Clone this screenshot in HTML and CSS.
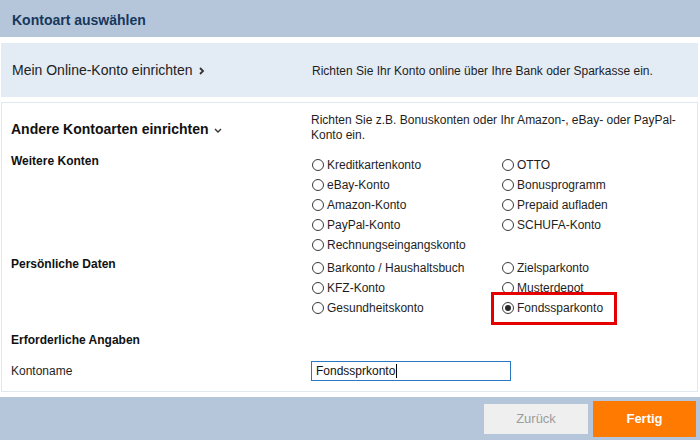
FILE: index.html
```html
<!DOCTYPE html>
<html lang="de">
<head>
<meta charset="utf-8">
<title>Kontoart auswählen</title>
<link rel="stylesheet" href="styles.css">
</head>
<body>
<div class="dialog">
  <header class="titlebar"><h1>Kontoart auswählen</h1></header>

  <section class="online">
    <div class="online-link">Mein Online-Konto einrichten
      <svg class="chev-right" width="6" height="8" viewBox="0 0 6 8"><polyline points="1,1 4,4 1,7" fill="none" stroke="#333" stroke-width="1.8"/></svg>
    </div>
    <p class="desc">Richten Sie Ihr Konto online über Ihre Bank oder Sparkasse ein.</p>
  </section>

  <section class="other">
    <div class="row intro">
      <h2>Andere Kontoarten einrichten
        <svg class="chev-down" width="8" height="5" viewBox="0 0 8 5"><polyline points="1,1 4,4 7,1" fill="none" stroke="#333" stroke-width="1.4"/></svg>
      </h2>
      <p class="desc">Richten Sie z.B. Bonuskonten oder Ihr Amazon-, eBay- oder PayPal-<br>Konto ein.</p>
    </div>

    <div class="row group first">
      <h3>Weitere Konten</h3>
      <ul class="options">
        <li><span class="radio"></span>Kreditkartenkonto</li>
        <li><span class="radio"></span>OTTO</li>
        <li><span class="radio"></span>eBay-Konto</li>
        <li><span class="radio"></span>Bonusprogramm</li>
        <li><span class="radio"></span>Amazon-Konto</li>
        <li><span class="radio"></span>Prepaid aufladen</li>
        <li><span class="radio"></span>PayPal-Konto</li>
        <li><span class="radio"></span>SCHUFA-Konto</li>
        <li><span class="radio"></span>Rechnungseingangskonto</li>
      </ul>
    </div>

    <div class="row group second">
      <h3>Persönliche Daten</h3>
      <ul class="options">
        <li><span class="radio"></span>Barkonto / Haushaltsbuch</li>
        <li><span class="radio"></span>Zielsparkonto</li>
        <li><span class="radio"></span>KFZ-Konto</li>
        <li><span class="radio"></span>Musterdepot</li>
        <li><span class="radio"></span>Gesundheitskonto</li>
        <li class="highlight"><span class="radio checked"></span>Fondssparkonto</li>
      </ul>
    </div>

    <h3 class="required">Erforderliche Angaben</h3>

    <div class="row field">
      <label>Kontoname</label>
      <div class="textbox" role="textbox">Fondssprkonto<span class="caret"></span></div>
    </div>
  </section>

  <footer class="actions">
    <button class="btn back">Zurück</button>
    <button class="btn done">Fertig</button>
  </footer>
</div>
</body>
</html>
```

FILE: styles.css
```css
html, body {
  margin: 0;
  padding: 0;
  background: #ffffff;
}

body {
  font-family: "Liberation Sans", Arial, sans-serif;
  color: #1e1e1e;
  width: 700px;
  height: 440px;
  overflow: hidden;
}

.dialog {
  display: flex;
  flex-direction: column;
  height: 440px;
}

.titlebar {
  height: 37px;
  background: #b5c6da;
  display: flex;
  align-items: center;
  padding-left: 12px;
}

.titlebar h1 {
  margin: 0;
  font-size: 14px;
  font-weight: bold;
  color: #17385c;
  line-height: 16px;
  padding-top: 2px;
}

.online {
  margin: 6px 2px 0 1px;
  height: 54px;
  background: #e3ebf5;
  display: grid;
  grid-template-columns: 300px 1fr;
  align-items: center;
  padding-left: 11px;
}

.online-link {
  font-size: 14px;
  line-height: 16px;
  color: #222;
  padding-bottom: 1px;
}

.chev-right {
  margin-left: 3px;
  vertical-align: 0;
}

.desc {
  margin: 0;
  font-size: 12px;
  line-height: 15px;
  color: #1e1e1e;
}

.online .desc {
  padding-top: 3px;
}

.other {
  margin: 5px 2px 0 1px;
  border: 1px solid #dfe7f0;
  padding: 10px 0 10px 9px;
}

.row {
  display: grid;
  grid-template-columns: 300px 1fr;
}

.intro {
  align-items: center;
}

.intro h2 {
  margin: 0;
  font-size: 14px;
  font-weight: bold;
  line-height: 16px;
  color: #111;
  padding-top: 2px;
}

.chev-down {
  margin-left: 2px;
  vertical-align: 1px;
}

.group {
  align-items: start;
}

.group.first {
  margin-top: 12px;
}

.group.second {
  margin-top: 3px;
}

h3 {
  margin: 0;
  font-size: 12px;
  font-weight: bold;
  line-height: 13px;
  color: #111;
}

.options {
  list-style: none;
  margin: 0;
  padding: 0;
  display: grid;
  grid-template-columns: 190px 190px;
  grid-auto-rows: 20px;
}

.options li {
  display: flex;
  align-items: center;
  font-size: 12px;
  color: #1e1e1e;
  padding-left: 1px;
}

.radio {
  width: 12px;
  height: 12px;
  box-sizing: border-box;
  border: 1px solid #3a3a3a;
  border-radius: 50%;
  background: #fff;
  margin-right: 3px;
  flex: none;
  display: flex;
  align-items: center;
  justify-content: center;
}

.radio.checked::after {
  content: "";
  width: 6px;
  height: 6px;
  border-radius: 50%;
  background: #2a2a2a;
}

.highlight {
  position: relative;
}

.highlight::after {
  content: "";
  position: absolute;
  left: -10px;
  top: -6px;
  width: 126px;
  height: 33px;
  box-sizing: border-box;
  border: 3px solid #e40000;
}

.required {
  margin-top: 15px;
  line-height: 14px;
}

.field {
  margin-top: 14px;
  align-items: center;
}

.field label {
  font-size: 12px;
  color: #1e1e1e;
}

.textbox {
  width: 200px;
  height: 20px;
  box-sizing: border-box;
  border: 1px solid #2a78c2;
  font-size: 12px;
  line-height: 18px;
  padding-left: 4px;
  color: #111;
  display: flex;
  align-items: center;
}

.caret {
  display: inline-block;
  width: 1px;
  height: 14px;
  background: #000;
  margin-left: 1px;
}

.actions {
  margin-top: 5px;
  flex: 1;
  background: #b5c6da;
  display: flex;
  justify-content: flex-end;
  align-items: center;
  gap: 5px;
  padding-right: 4px;
}

.btn {
  border: none;
  font-family: "Liberation Sans", Arial, sans-serif;
  font-size: 13px;
  padding: 0;
  cursor: pointer;
}

.btn.back {
  width: 104px;
  height: 30px;
  background: #efefef;
  color: #9c9c9c;
}

.btn.done {
  width: 103px;
  height: 36px;
  background: #ff7a00;
  color: #ffffff;
  font-weight: bold;
}
```
